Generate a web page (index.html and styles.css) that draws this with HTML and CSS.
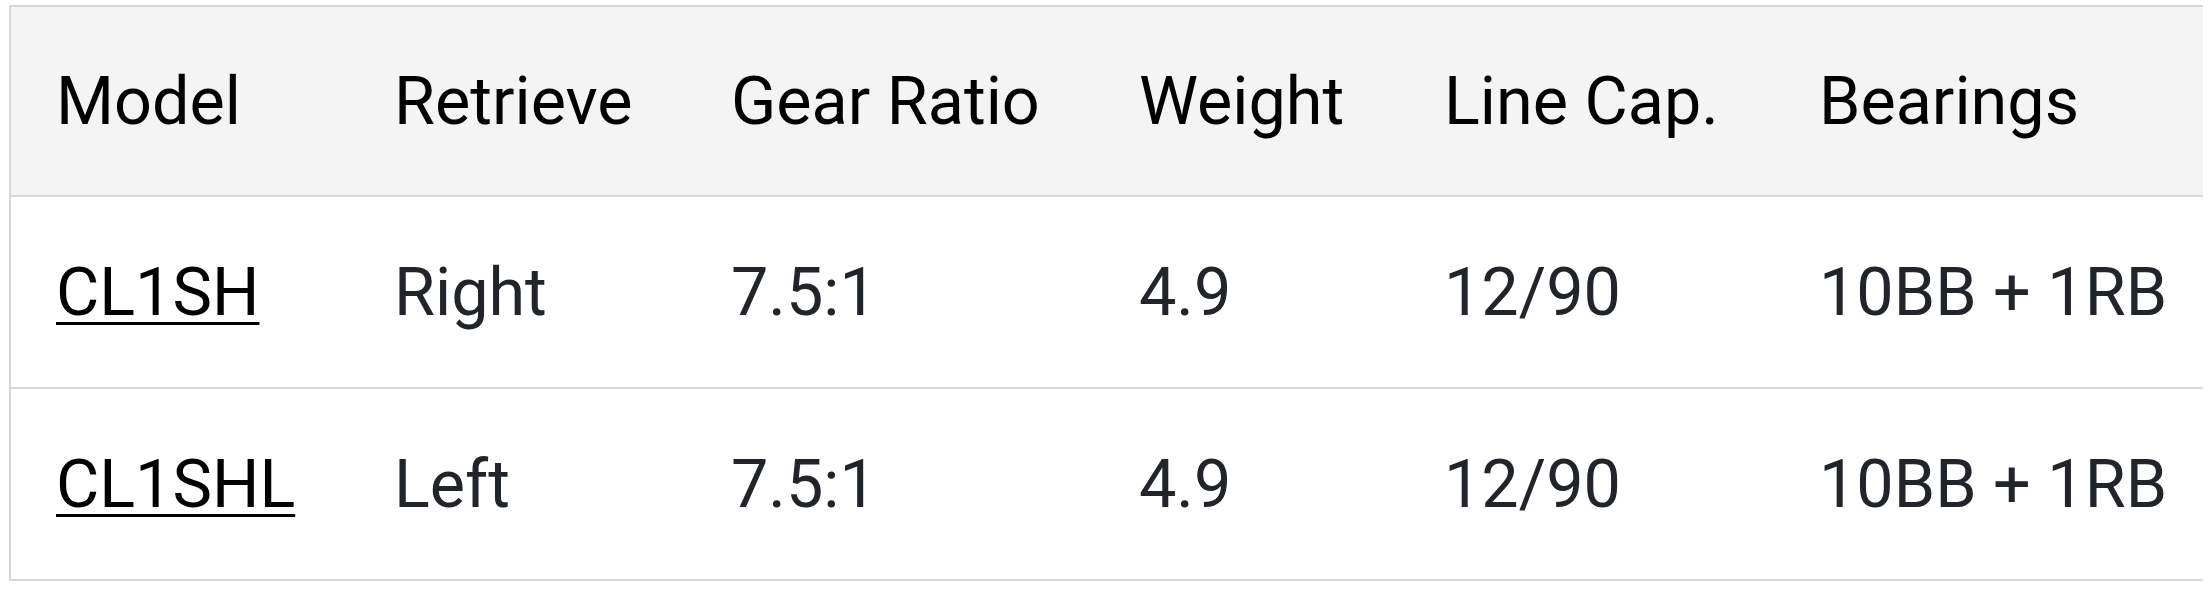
FILE: index.html
```html
<!DOCTYPE html>
<html lang="en">
<head>
<meta charset="utf-8">
<title>Reel specifications</title>
<link rel="stylesheet" href="styles.css">
</head>
<body>
<div class="page">
  <table class="specs">
    <colgroup>
      <col class="c-model">
      <col class="c-retrieve">
      <col class="c-gear">
      <col class="c-weight">
      <col class="c-line">
      <col class="c-bearings">
    </colgroup>
    <thead>
      <tr>
        <th>Model</th>
        <th>Retrieve</th>
        <th>Gear Ratio</th>
        <th>Weight</th>
        <th>Line Cap.</th>
        <th>Bearings</th>
      </tr>
    </thead>
    <tbody>
      <tr>
        <td><a class="model-link" href="#">CL1SH</a></td>
        <td>Right</td>
        <td>7.5:1</td>
        <td>4.9</td>
        <td>12/90</td>
        <td>10BB + 1RB</td>
      </tr>
      <tr>
        <td><a class="model-link" href="#">CL1SHL</a></td>
        <td>Left</td>
        <td>7.5:1</td>
        <td>4.9</td>
        <td>12/90</td>
        <td>10BB + 1RB</td>
      </tr>
    </tbody>
  </table>
</div>
</body>
</html>
```

FILE: styles.css
```css
html, body {
  margin: 0;
  padding: 0;
  background: #ffffff;
}

.page {
  padding: 5px 0 0 9px;
}

.specs {
  width: 2194px;
  table-layout: fixed;
  border-collapse: separate;
  border-spacing: 0;
  font-family: Roboto, "Noto Sans", "Liberation Sans", sans-serif;
  font-size: 66.5px;
  border-top: 2px solid #d6d6d6;
  border-left: 2px solid #d6d6d6;
}

.c-model { width: 338px; }
.c-retrieve { width: 337px; }
.c-gear { width: 408px; }
.c-weight { width: 305px; }
.c-line { width: 375px; }
.c-bearings { width: 429px; }

.specs th,
.specs td {
  padding: 0 0 0 45px;
  text-align: left;
  vertical-align: middle;
  white-space: nowrap;
  border-bottom: 2px solid #d6d6d6;
  line-height: normal;
}

.specs th {
  height: 188px;
  background: #f4f4f4;
  color: #000000;
  font-weight: 400;
}

.specs td {
  height: 190px;
  color: #212529;
}

.model-link {
  color: #000000;
  text-decoration: underline;
  text-decoration-thickness: 3px;
  text-underline-offset: 7px;
}
```
